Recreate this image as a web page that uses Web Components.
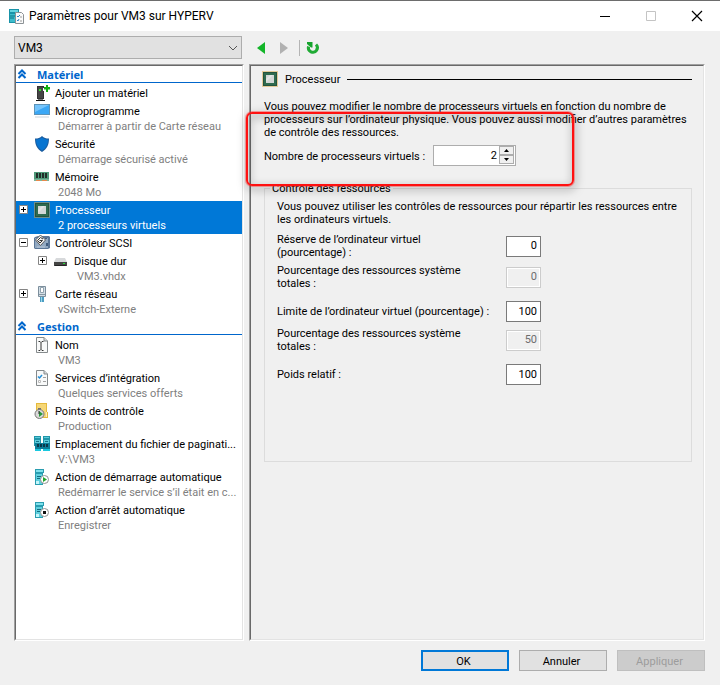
<!DOCTYPE html>
<html lang="fr">
<head>
<meta charset="utf-8">
<title>Paramètres pour VM3 sur HYPERV</title>
<style>
    body {
        margin: 0;
        background: #f0f0f0;
        color: #000;
        font: 11px/13px Roboto, "Liberation Sans", sans-serif;
    }
</style>
</head>
<body>
<settings-window></settings-window>

<script>
const server = `
    <path d="M1 0h9v4H1zM1 4h8v12H1z" fill="#2a9db0"/>
    <path d="M2 1h7v2H2z" fill="#7fe0ec"/>
    <path d="M2 5h6v10H2z" fill="#5fd0de"/>
    <path d="M3 7.500h4M3 9.500h3" stroke="#126c80"/>
    <path d="M2 12h3v3H2z" fill="#c5f6fb"/>`;

const chip = `
    <rect x=".5" y=".5" width="15" height="15" fill="none" stroke="#d9a441" stroke-dasharray="1 1"/>
    <rect x="1" y="1" width="14" height="14" fill="#2f6b4f"/>
    <rect x="1.500" y="1.500" width="13" height="13" fill="none" stroke="#24543e"/>
    <path d="M4 4h8v8H4z" fill="#d3d7d5"/>
    <path d="M4 11V8l4-4h3z" fill="#e2e5e4"/>`;

const page = `
    <path d="M2.500 1v14.500h11V4l-3.500-3.500H2.500z" fill="#f8f9f9" stroke="#858a8c"/>
    <path d="M10 .5V4h3.500" fill="#d5d8da" stroke="#858a8c"/>`;

const ICONS = {
    app: `
        <path d="M0 1h10v4H0zM0 5h9v10H0z" fill="#1993a8"/>
        <path d="M1 2h8v2H1z" fill="#66d4e0"/>
        <path d="M1 6h7v8H1z" fill="#3dbccb"/>
        <path d="M1 8h5M1 10h4" stroke="#0d7488"/>
        <path d="M6.500 4.500h6l2 2v9h-8z" fill="#fafafa" stroke="#8c9296"/>
        <path d="M8 8l1 1 2-2M8 12l1 1 1-2" fill="none" stroke="#2d83c8"/>
        <path d="M11 9h2M11 13h2" stroke="#9b9b9b"/>`,
    add: `
        <path d="M3 1h7v13H3z" fill="#333"/>
        <path d="M4 2h5v11H4z" fill="#454545"/>
        <path d="M4 14h5v1H4z" fill="#777"/>
        <path d="M2 15h9v1H2z" fill="#111"/>
        <path d="M5 4h2v2H5z" fill="#35e22f"/>
        <path d="M9 3h2V0h3v3h2v3h-2v2h-3V6H9z" fill="#fff"/>
        <path d="M10 3h6M10 3.500h6M13 0v7" stroke="#12b012" stroke-width="2"/>`,
    monitor: `
        <path d="M0 1h16v11H0z" fill="#5c93b8"/>
        <path d="M1 2h14v9H1z" fill="#3aa7f5"/>
        <path d="M1 2h14L1 9z" fill="#75c4fb"/>
        <path d="M1 14h14" stroke="#c8d3dc"/>`,
    shield: `
        <path d="M8 0c2 2 4 2.500 7 2.500C15 9 13 13 8 16 3 13 1 9 1 2.500 4 2.500 6 2 8 0z" fill="#1b5c9e"/>
        <path d="M8 1.500c2 1.500 3.500 2 6 2C14 8.500 12 12 8 14.500 4 12 2 8.500 2 3.500c2.500 0 4-.5 6-2z" fill="#0875d1"/>`,
    memory: `
        <path d="M0 3h15v9H0z" fill="#4f9878"/>
        <path d="M0 10h15v2H0z" fill="#79b497"/>
        <path d="M2 4h2v5H2zM5 4h2v5H5zM8 4h2v5H8zM11 4h2v5h-2z" fill="#222c28"/>
        <path d="M2 11h4v1H2zM8 11h5v1H8z" fill="#e7894c"/>`,
    chip,
    scsi: `
        <path d="M1 2l3-1h11l1 1v11l-2 1H1L0 13V3z" fill="#5b7697"/>
        <path d="M1 3h13v10H1z" fill="#91a8c1"/>
        <path d="M11 3h2v1h-2zM12 8h2v3h-2z" fill="#405c7e"/>
        <path d="M6.500 0l5 5-5 5.500-5-5.500z" fill="#f6f6f6" stroke="#5a5a5a"/>
        <path d="M9 4L6.500 2.500 3.500 5.500 6 8l2.500-2.500h-3" fill="none" stroke="#303030"/>
        <path d="M3 12h8" stroke="#bbcadb"/>`,
    disk: `
        <path d="M3 5h9l2 4H1z" fill="#d7d9db"/>
        <path d="M1 9h13v4H1z" fill="#444"/>
        <path d="M2 12h11v1H2z" fill="#252525"/>
        <path d="M10 10h2v1h-2z" fill="#27e13b"/>`,
    network: `
        <path d="M4.500.5h7v10h-7z" fill="#d3dfe7" stroke="#7c8e9c"/>
        <path d="M6.500 1.500h3v5h-3z" fill="#fff" stroke="#91a2ae"/>
        <path d="M5 8h6v1H5z" fill="#8898a3"/>
        <path d="M6 11h4v5H6z" fill="#4d9dc2"/>
        <path d="M7 11h1v5H7z" fill="#9bd9ed"/>`,
    name: page + `<path d="M4.500 4.500h1.500l1 1 1-1h1.500M7 5.500v7M4.500 13.500H6l1-1 1 1h1.500" fill="none" stroke="#333"/>`,
    services: page + `
        <path d="M4 6.500l1.500 1.500L8 5" fill="none" stroke="#258fd7" stroke-width="1.500"/>
        <path d="M9 7.500h3M9 11.500h3" stroke="#a0a0a0"/>
        <path d="M4.500 10.500h2v2h-2z" fill="#fff" stroke="#bbb"/>`,
    checkpoint: `
        <path d="M2 0h11v9h1v6H2z" fill="#e4b93d"/>
        <path d="M3 1h9v13H3z" fill="#f6d776"/>
        <path d="M12 9h1v5h-1z" fill="#fff0b4"/>
        <path d="M4 5h3v2H4z" fill="#707070"/>
        <circle cx="5.500" cy="11" r="4.500" fill="#dadada" stroke="#777"/>
        <path d="M5 8l4 3-4 3z" fill="#2b9a3a"/>
        <path d="M5 11V8" stroke="#333"/>`,
    paging: `
        <path d="M0 0h7v10H0zM9 0h7v10H9z" fill="#2196a9"/>
        <path d="M1 1h5v1H1zM10 1h5v1h-5zM1 4h5v5H1zM10 4h5v5h-5z" fill="#5cccdc"/>
        <path d="M2 5h3v1H2zM11 5h3v1h-3z" fill="#12738a"/>
        <path d="M1 7h15v6H1z" fill="#0c7d98"/>
        <path d="M1 13h6v2H1zM9 13h7v2H9z" fill="#19c8df"/>
        <path d="M3 8h2v3H3zM6 8h2v3H6zM9 8h2v3H9zM12 8h2v3h-2z" fill="#09384a"/>`,
    start: server + `
        <circle cx="10.500" cy="10.500" r="4" fill="#fff" stroke="#929292"/>
        <path d="M9 8v5l4-2.500z" fill="#23a52c"/>`,
    stop: server + `
        <circle cx="10.500" cy="10.500" r="4" fill="#fff" stroke="#929292"/>
        <path d="M9 9h3v3H9z" fill="#111"/>`,
    collapse: `<path d="M4.500 8L8 4.500 11.500 8M4.500 12L8 8.500l3.500 3.500" fill="none" stroke="#0066cc" stroke-width="2"/>`,
    back: `<path d="M12 2v12L4 8z" fill="#13b529"/>`,
    forward: `<path d="M4 2v12l8-6z" fill="#b1b1b1"/>`,
    refresh: `
        <path d="M3.500 6.500a4.500 4.500 0 1 0 7.500-2" fill="none" stroke="#20ab35" stroke-width="3"/>
        <path d="M2 2h5.500v5.500H6L2 4z" fill="#16a32d"/>`,
    minimize: `<path d="M3 8.500h10" stroke="#000"/>`,
    maximize: `<path d="M3.500 3.500h9v9h-9z" fill="none" stroke="#c4c4c4"/>`,
    close: `<path d="M3 3l10 10M13 3L3 13" stroke="#000" stroke-width="1.200"/>`
};

class VmIcon extends HTMLElement {
    static observedAttributes = ['name'];

    constructor() {
        super();
        this.attachShadow({ mode: 'open' });
    }

    attributeChangedCallback() {
        this.shadowRoot.innerHTML = `
            <style>
                :host { display: block; flex: none; width: 16px; height: 16px; }
                svg { display: block; }
            </style>
            <svg width="16" height="16" viewBox="0 0 16 16" aria-hidden="true">${ICONS[this.getAttribute('name')]}</svg>
        `;
    }
}

class TitleBar extends HTMLElement {
    constructor() {
        super();
        this.attachShadow({ mode: 'open' });
        this.shadowRoot.innerHTML = `
            <style>
                :host {
                    display: flex;
                    align-items: center;
                    height: 30px;
                    padding-left: 9px;
                    border-top: 1px solid #6d6d6d;
                    background: #fff;
                }
                h1 {
                    flex: 1;
                    margin: 0 0 0 4px;
                    font: 12px/16px Roboto, "Liberation Sans", sans-serif;
                }
                button {
                    display: grid;
                    place-items: center;
                    width: 46px;
                    height: 30px;
                    padding: 0;
                    border: 0;
                    background: none;
                }
            </style>
            <vm-icon name="app"></vm-icon>
            <h1><slot></slot></h1>
            <button aria-label="Réduire"><vm-icon name="minimize"></vm-icon></button>
            <button aria-label="Agrandir" disabled><vm-icon name="maximize"></vm-icon></button>
            <button aria-label="Fermer"><vm-icon name="close"></vm-icon></button>
        `;
    }
}

class VmToolbar extends HTMLElement {
    constructor() {
        super();
        this.attachShadow({ mode: 'open' });
        this.shadowRoot.innerHTML = `
            <style>
                :host { display: flex; align-items: center; }
                .picker { display: grid; width: 228px; margin-right: 11px; }
                select, svg { grid-area: 1 / 1; }
                select {
                    appearance: none;
                    height: 23px;
                    padding: 0 3px;
                    border: 1px solid #adadad;
                    border-radius: 0;
                    background: #e1e1e1;
                    color: #000;
                    font: 12px/16px Roboto, "Liberation Sans", sans-serif;
                }
                svg { place-self: center end; margin-right: 4px; pointer-events: none; }
                button { padding: 0; border: 0; background: none; }
                button + button { margin-left: 7px; }
                .separator { width: 1px; height: 16px; margin: 0 5px 0 7px; background: #b4b4b4; }
            </style>
            <div class="picker">
                <select aria-label="Ordinateur virtuel"><option>VM3</option></select>
                <svg width="10" height="6" viewBox="0 0 10 6"><path d="M1 1l4 4 4-4" fill="none" stroke="#555"/></svg>
            </div>
            <button aria-label="Précédent"><vm-icon name="back"></vm-icon></button>
            <button aria-label="Suivant" disabled><vm-icon name="forward"></vm-icon></button>
            <span class="separator"></span>
            <button aria-label="Actualiser"><vm-icon name="refresh"></vm-icon></button>
        `;
    }
}

class SunkenPane extends HTMLElement {
    constructor() {
        super();
        this.attachShadow({ mode: 'open' });
        this.shadowRoot.innerHTML = `
            <style>
                :host {
                    display: block;
                    border: 1px solid;
                    border-color: #a0a0a0 #fff #fff #a0a0a0;
                }
                div {
                    box-sizing: border-box;
                    height: 100%;
                    border: 1px solid;
                    border-color: #696969 #e3e3e3 #e3e3e3 #696969;
                    background: var(--pane-color, #f0f0f0);
                }
            </style>
            <div><slot></slot></div>
        `;
    }
}

class NavSection extends HTMLElement {
    constructor() {
        super();
        this.attachShadow({ mode: 'open' });
        this.shadowRoot.innerHTML = `
            <style>
                :host { display: block; }
                h2 {
                    display: flex;
                    align-items: center;
                    gap: 7px;
                    height: 16px;
                    margin: 0 0 1px;
                    border-bottom: 1px solid #0066cc;
                    color: #0066cc;
                    font: bold 11px/16px "Noto Sans", sans-serif;
                }
                vm-icon { margin-left: -2px; }
                span { padding-top: 2px; }
            </style>
            <h2><vm-icon name="collapse"></vm-icon><span></span></h2>
            <slot></slot>
        `;
    }

    connectedCallback() {
        this.shadowRoot.querySelector('span').textContent = this.getAttribute('heading');
    }
}

class NavItem extends HTMLElement {
    constructor() {
        super();
        this.attachShadow({ mode: 'open' });
        this.shadowRoot.innerHTML = `
            <style>
                :host { display: block; }
                :host([nested]) { padding-left: 19px; }
                :host([selected]) { background: #0078d7; color: #fff; }
                .item {
                    display: grid;
                    grid-template-columns: 9px 16px minmax(0, 1fr);
                    align-items: center;
                    padding-left: 3px;
                }
                button {
                    width: 9px;
                    height: 9px;
                    padding: 0;
                    border: 0;
                    background: none;
                }
                svg { display: block; }
                vm-icon { margin-left: 6px; }
                .label { padding: 2px 0 0 11px; line-height: 16px; white-space: nowrap; }
                .detail {
                    grid-column: 3;
                    padding: 0 0 2px 14px;
                    color: #808080;
                    line-height: 13px;
                    white-space: nowrap;
                }
                .detail:empty { display: none; }
                :host([selected]) .detail { color: #fff; }
            </style>
            <div class="item">
                <span class="toggle"></span>
                <vm-icon></vm-icon>
                <span class="label"><slot></slot></span>
                <span class="detail"></span>
            </div>
        `;
    }

    connectedCallback() {
        const root = this.shadowRoot;
        const toggle = this.getAttribute('toggle');
        root.querySelector('vm-icon').setAttribute('name', this.getAttribute('icon'));
        root.querySelector('.detail').textContent = this.getAttribute('detail') || '';
        if (toggle) {
            root.querySelector('.toggle').innerHTML = `
                <button aria-label="${toggle === 'plus' ? 'Développer' : 'Réduire'}">
                    <svg width="9" height="9" viewBox="0 0 9 9">
                        <path d="M.5.5h8v8h-8z" fill="#fff" stroke="#848484"/>
                        <path d="M2 4.500h5${toggle === 'plus' ? 'M4.500 2v5' : ''}" stroke="#000"/>
                    </svg>
                </button>
            `;
        }
    }
}

class NumberField extends HTMLElement {
    constructor() {
        super();
        this.attachShadow({ mode: 'open' });
        this.shadowRoot.innerHTML = `
            <style>
                :host { display: flex; align-items: center; }
                label { flex: none; width: 229px; }
                .box {
                    display: flex;
                    box-sizing: border-box;
                    width: 35px;
                    height: 21px;
                    border: 1px solid #7a7a7a;
                    background: #fff;
                }
                input {
                    flex: 1;
                    box-sizing: border-box;
                    min-width: 0;
                    padding: 0 3px 1px 0;
                    border: 0;
                    background: none;
                    color: #000;
                    font: inherit;
                    text-align: right;
                }
                .spin { display: none; }
                :host([disabled]) .box { border-color: #ccc; background: #f0f0f0; box-shadow: inset 0 0 0 1px #fff; }
                :host([disabled]) input { color: #6d6d6d; }
                :host([spinner]) label { width: 169px; padding-top: 1px; }
                :host([spinner]) .box { width: 83px; border-color: #adadad; }
                :host([spinner]) input { padding-right: 2px; }
                :host([spinner]) .spin { display: grid; width: 15px; padding: 0 1px 1px 0; }
                .spin button {
                    display: grid;
                    place-items: center;
                    padding: 0;
                    border: 1px solid #adadad;
                    background: #f0f0f0;
                }
            </style>
            <label for="value"><slot></slot></label>
            <div class="box">
                <input id="value" type="text" inputmode="numeric">
                <div class="spin">
                    <button aria-label="Augmenter"><svg width="5" height="3"><path d="M0 3h5L2.500 0z"/></svg></button>
                    <button aria-label="Diminuer"><svg width="5" height="3"><path d="M0 0h5L2.500 3z"/></svg></button>
                </div>
            </div>
        `;
    }

    connectedCallback() {
        const input = this.shadowRoot.querySelector('input');
        input.value = this.getAttribute('value');
        input.disabled = this.hasAttribute('disabled');
    }
}

class ProcessorPanel extends HTMLElement {
    constructor() {
        super();
        this.attachShadow({ mode: 'open' });
        this.shadowRoot.innerHTML = `
            <style>
                :host { display: block; padding: 5px 11px; }
                h2 {
                    display: flex;
                    align-items: center;
                    gap: 7px;
                    margin: 0;
                    font: inherit;
                }
                h2::after { content: ""; flex: 1; height: 1px; background: #000; }
                p { margin: 0; }
                .intro { margin: 13px 0 6px 2px; }
                .count { position: relative; margin-left: 2px; }
                .highlight {
                    position: absolute;
                    top: -33px;
                    left: -18px;
                    box-sizing: border-box;
                    width: 328px;
                    height: 74px;
                    border: 2px solid #f11;
                    border-radius: 6px;
                    box-shadow: 0 0 0 1px rgba(255, 40, 40, .4);
                    filter: drop-shadow(1px 3px 4px rgba(0, 0, 0, .5));
                    pointer-events: none;
                }
                fieldset {
                    box-sizing: border-box;
                    min-height: 280px;
                    margin: 16px 0 0 2px;
                    padding: 5px 12px 12px;
                    border: 1px solid #dcdcdc;
                }
                legend { margin-left: -7px; padding: 0 2px; }
                .fields { display: grid; gap: 11px; margin-top: 7px; }
                .pair { display: grid; gap: 5px; }
            </style>
            <h2><vm-icon name="chip"></vm-icon>Processeur</h2>
            <p class="intro">
                Vous pouvez modifier le nombre de processeurs virtuels en fonction du nombre de
                processeurs sur l’ordinateur physique. Vous pouvez aussi modifier d’autres paramètres
                de contrôle des ressources.
            </p>
            <div class="count">
                <number-field spinner value="2">Nombre de processeurs virtuels :</number-field>
                <div class="highlight"></div>
            </div>
            <fieldset>
                <legend>Contrôle des ressources</legend>
                <p>Vous pouvez utiliser les contrôles de ressources pour répartir les ressources entre les ordinateurs virtuels.</p>
                <div class="fields">
                    <div class="pair">
                        <number-field value="0">Réserve de l’ordinateur virtuel<br>(pourcentage) :</number-field>
                        <number-field value="0" disabled>Pourcentage des ressources système<br>totales :</number-field>
                    </div>
                    <div class="pair">
                        <number-field value="100">Limite de l’ordinateur virtuel (pourcentage) :</number-field>
                        <number-field value="50" disabled>Pourcentage des ressources système<br>totales :</number-field>
                    </div>
                    <number-field value="100">Poids relatif :</number-field>
                </div>
            </fieldset>
        `;
    }
}

class DialogButton extends HTMLElement {
    constructor() {
        super();
        this.attachShadow({ mode: 'open' });
        this.shadowRoot.innerHTML = `
            <style>
                :host { display: block; }
                button {
                    display: block;
                    width: 88px;
                    height: 21px;
                    padding: 1px 3px 0 0;
                    border: 1px solid #adadad;
                    background: #e1e1e1;
                    color: #000;
                    font: inherit;
                }
                :host([primary]) button { border: 2px solid #0078d7; }
                button:disabled { border-color: #bfbfbf; background: #ccc; color: #9c9c9c; }
            </style>
            <button><slot></slot></button>
        `;
    }

    connectedCallback() {
        this.shadowRoot.querySelector('button').disabled = this.hasAttribute('disabled');
    }
}

class SettingsWindow extends HTMLElement {
    constructor() {
        super();
        this.attachShadow({ mode: 'open' });
        this.shadowRoot.innerHTML = `
            <style>
                :host { display: flex; flex-direction: column; min-height: 100vh; }
                main {
                    display: flex;
                    flex: 1;
                    flex-direction: column;
                    gap: 5px;
                    padding: 5px 15px 14px 14px;
                }
                .columns {
                    display: grid;
                    flex: 1;
                    grid-template-columns: 230px minmax(0, 1fr);
                    gap: 5px;
                }
                nav { --pane-color: #fff; display: grid; }
                footer { display: flex; justify-content: flex-end; gap: 10px; margin-top: 4px; }
            </style>
            <title-bar>Paramètres pour VM3 sur HYPERV</title-bar>
            <main>
                <vm-toolbar></vm-toolbar>
                <div class="columns">
                    <nav>
                        <sunken-pane>
                            <nav-section heading="Matériel">
                                <nav-item icon="add">Ajouter un matériel</nav-item>
                                <nav-item icon="monitor" detail="Démarrer à partir de Carte réseau">Microprogramme</nav-item>
                                <nav-item icon="shield" detail="Démarrage sécurisé activé">Sécurité</nav-item>
                                <nav-item icon="memory" detail="2048 Mo">Mémoire</nav-item>
                                <nav-item icon="chip" detail="2 processeurs virtuels" toggle="plus" selected>Processeur</nav-item>
                                <nav-item icon="scsi" toggle="minus">Contrôleur SCSI</nav-item>
                                <nav-item icon="disk" detail="VM3.vhdx" toggle="plus" nested>Disque dur</nav-item>
                                <nav-item icon="network" detail="vSwitch-Externe" toggle="plus">Carte réseau</nav-item>
                            </nav-section>
                            <nav-section heading="Gestion">
                                <nav-item icon="name" detail="VM3">Nom</nav-item>
                                <nav-item icon="services" detail="Quelques services offerts">Services d’intégration</nav-item>
                                <nav-item icon="checkpoint" detail="Production">Points de contrôle</nav-item>
                                <nav-item icon="paging" detail="V:\\VM3">Emplacement du fichier de paginati...</nav-item>
                                <nav-item icon="start" detail="Redémarrer le service s’il était en c...">Action de démarrage automatique</nav-item>
                                <nav-item icon="stop" detail="Enregistrer">Action d’arrêt automatique</nav-item>
                            </nav-section>
                        </sunken-pane>
                    </nav>
                    <sunken-pane><processor-panel></processor-panel></sunken-pane>
                </div>
                <footer>
                    <dialog-button primary>OK</dialog-button>
                    <dialog-button>Annuler</dialog-button>
                    <dialog-button disabled>Appliquer</dialog-button>
                </footer>
            </main>
        `;
    }
}

customElements.define('vm-icon', VmIcon);
customElements.define('title-bar', TitleBar);
customElements.define('vm-toolbar', VmToolbar);
customElements.define('sunken-pane', SunkenPane);
customElements.define('nav-section', NavSection);
customElements.define('nav-item', NavItem);
customElements.define('number-field', NumberField);
customElements.define('processor-panel', ProcessorPanel);
customElements.define('dialog-button', DialogButton);
customElements.define('settings-window', SettingsWindow);
</script>
</body>
</html>
